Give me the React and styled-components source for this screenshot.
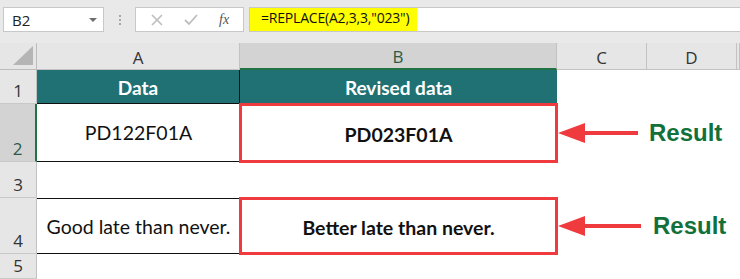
import React from 'react'
import styled, { createGlobalStyle, css } from 'styled-components'

const GlobalStyle = createGlobalStyle`
  html, body { margin: 0; padding: 0; background: #fff; }
  body { overflow: hidden; }
`

const TEAL = '#1f7173'
const RED = '#ef3a3e'
const SEL = '#217346'

const Window = styled.div`
  width: 740px;
  height: 279px;
  overflow: hidden;
  font-family: Lato, "Open Sans", sans-serif;
`

const FormulaBar = styled.div`
  display: flex;
  align-items: flex-start;
  height: 43px;
  box-sizing: border-box;
  padding: 7px 0 0 3px;
  background: #e9e9e9;
`

const NameBox = styled.div`
  width: 101px;
  height: 25px;
  box-sizing: border-box;
  display: flex;
  align-items: center;
  justify-content: space-between;
  padding: 0 6px 0 8px;
  background: #fff;
  border: 1px solid #c8c8c8;
  font: 15px "Open Sans", sans-serif;
  color: #222;
`

const Caret = styled.span`
  width: 0;
  height: 0;
  border-left: 4px solid transparent;
  border-right: 4px solid transparent;
  border-top: 4px solid #6d6d6d;
`

const Grip = styled.div`
  width: 31px;
  height: 25px;
  display: flex;
  flex-direction: column;
  align-items: center;
  justify-content: center;
  gap: 2px;
  span {
    width: 2px;
    height: 2px;
    background: #a8a8a8;
  }
`

const IconBox = styled.div`
  width: 109px;
  height: 25px;
  box-sizing: border-box;
  display: flex;
  align-items: center;
  justify-content: space-around;
  padding: 0 4px;
  background: #fff;
  border: 1px solid #c8c8c8;
`

const Fx = styled.span`
  font: italic 14px "Liberation Serif", serif;
  color: #555;
`

const FormulaInput = styled.div`
  flex: 1;
  margin-left: 5px;
  height: 25px;
  box-sizing: border-box;
  background: #fff;
  border: 1px solid #c8c8c8;
  border-right: none;
  display: flex;
`

const Highlight = styled.span`
  background: #ffff00;
  padding: 0 8px 0 11px;
  line-height: 23px;
  font: 14px "Open Sans", sans-serif;
  letter-spacing: -0.2px;
  color: #111;
`

const Sheet = styled.div`
  display: grid;
  grid-template-columns: 37px 203px 317px 90px 90px 1fr;
  grid-template-rows: 27px 34px 58px 36px 56px 1fr;
  height: 236px;
`

const Corner = styled.div`
  background: #e6e6e6;
  border-right: 1px solid #bcbcbc;
  border-bottom: 1px solid #bcbcbc;
  box-sizing: border-box;
  display: flex;
  align-items: flex-end;
  justify-content: flex-end;
  padding: 0 3px 4px 0;
`

const ColHeader = styled.div`
  background: ${p => (p.$active ? '#d3d3d3' : '#e6e6e6')};
  color: ${p => (p.$active ? '#2b5a44' : '#333')};
  border-right: 1px solid #c2c2c2;
  border-bottom: ${p => (p.$active ? `2px solid ${SEL}` : '1px solid #c2c2c2')};
  box-sizing: border-box;
  display: flex;
  align-items: center;
  justify-content: center;
  font: 17px "Open Sans", sans-serif;
  padding-top: 2px;
`

const RowHeader = styled.div`
  background: ${p => (p.$active ? '#d3d3d3' : '#e6e6e6')};
  color: ${p => (p.$active ? '#2b5a44' : '#333')};
  border-right: ${p => (p.$active ? `2px solid ${SEL}` : '1px solid #c2c2c2')};
  border-bottom: 1px solid #c8c8c8;
  box-sizing: border-box;
  display: flex;
  align-items: flex-end;
  justify-content: center;
  font: 17px "Open Sans", sans-serif;
  line-height: 1;
  padding-bottom: 4px;
`

const Cell = styled.div`
  box-sizing: border-box;
  display: flex;
  align-items: center;
  justify-content: center;
  font-size: 19.5px;
  color: #111;
  ${p => p.$head && css`
    background: ${TEAL};
    color: #fff;
    font-weight: 700;
    font-size: 19px;
    border-bottom: 1px solid #111;
    padding-top: 2px;
  `}
  ${p => p.$divider && css`border-right: 1px solid #111;`}
  ${p => p.$boxed && css`
    outline: 3px solid ${RED};
    outline-offset: -2px;
    font-weight: 700;
    padding-top: 3px;
  `}
  ${p => p.$lineTop && css`border-top: 1px solid #111;`}
  ${p => p.$lineBottom && css`border-bottom: 1px solid #111;`}
`

const Callout = styled.div`
  grid-column: span 2;
  display: flex;
  align-items: center;
  padding-left: 1px;
`

const Result = styled.span`
  margin-left: ${p => p.$gap}px;
  font: 700 24px "Liberation Sans", Arial, sans-serif;
  color: #12703b;
`

const Arrow = ({ width }) => (
  <svg width={width} height="22" viewBox={`0 0 ${width} 22`}>
    <polygon points="0,11 27,1 27,21" fill={RED} />
    <rect x="26" y="9" width={width - 26} height="4" fill={RED} />
  </svg>
)

const Cross = () => (
  <svg width="14" height="14" viewBox="0 0 14 14">
    <path d="M2 2 L12 12 M12 2 L2 12" stroke="#bdbdbd" strokeWidth="1.6" />
  </svg>
)

const Check = () => (
  <svg width="16" height="14" viewBox="0 0 16 14">
    <path d="M2 7 L6 11 L14 2" stroke="#bdbdbd" strokeWidth="1.8" fill="none" />
  </svg>
)

const App = () => {
  return (
    <Window>
      <GlobalStyle />
      <FormulaBar>
        <NameBox>
          B2
          <Caret />
        </NameBox>
        <Grip>
          <span />
          <span />
          <span />
        </Grip>
        <IconBox>
          <Cross />
          <Check />
          <Fx>fx</Fx>
        </IconBox>
        <FormulaInput>
          <Highlight>=REPLACE(A2,3,3,"023")</Highlight>
        </FormulaInput>
      </FormulaBar>

      <Sheet>
        <Corner>
          <svg width="20" height="19" viewBox="0 0 20 19">
            <polygon points="20,0 20,19 0,19" fill="#b5b5b5" />
          </svg>
        </Corner>
        <ColHeader>A</ColHeader>
        <ColHeader $active>B</ColHeader>
        <ColHeader>C</ColHeader>
        <ColHeader>D</ColHeader>
        <ColHeader />

        <RowHeader>1</RowHeader>
        <Cell $head $divider>Data</Cell>
        <Cell $head>Revised data</Cell>
        <Cell />
        <Cell />
        <Cell />

        <RowHeader $active>2</RowHeader>
        <Cell $lineBottom>PD122F01A</Cell>
        <Cell $boxed>PD023F01A</Cell>
        <Callout>
          <Arrow width={80} />
          <Result $gap={11}>Result</Result>
        </Callout>
        <Cell />

        <RowHeader>3</RowHeader>
        <Cell />
        <Cell />
        <Cell />
        <Cell />
        <Cell />

        <RowHeader>4</RowHeader>
        <Cell $lineTop $lineBottom>Good late than never.</Cell>
        <Cell $boxed>Better late than never.</Cell>
        <Callout>
          <Arrow width={83} />
          <Result $gap={12}>Result</Result>
        </Callout>
        <Cell />

        <RowHeader>5</RowHeader>
        <Cell />
        <Cell />
        <Cell />
        <Cell />
        <Cell />
      </Sheet>
    </Window>
  )
}

export default App
